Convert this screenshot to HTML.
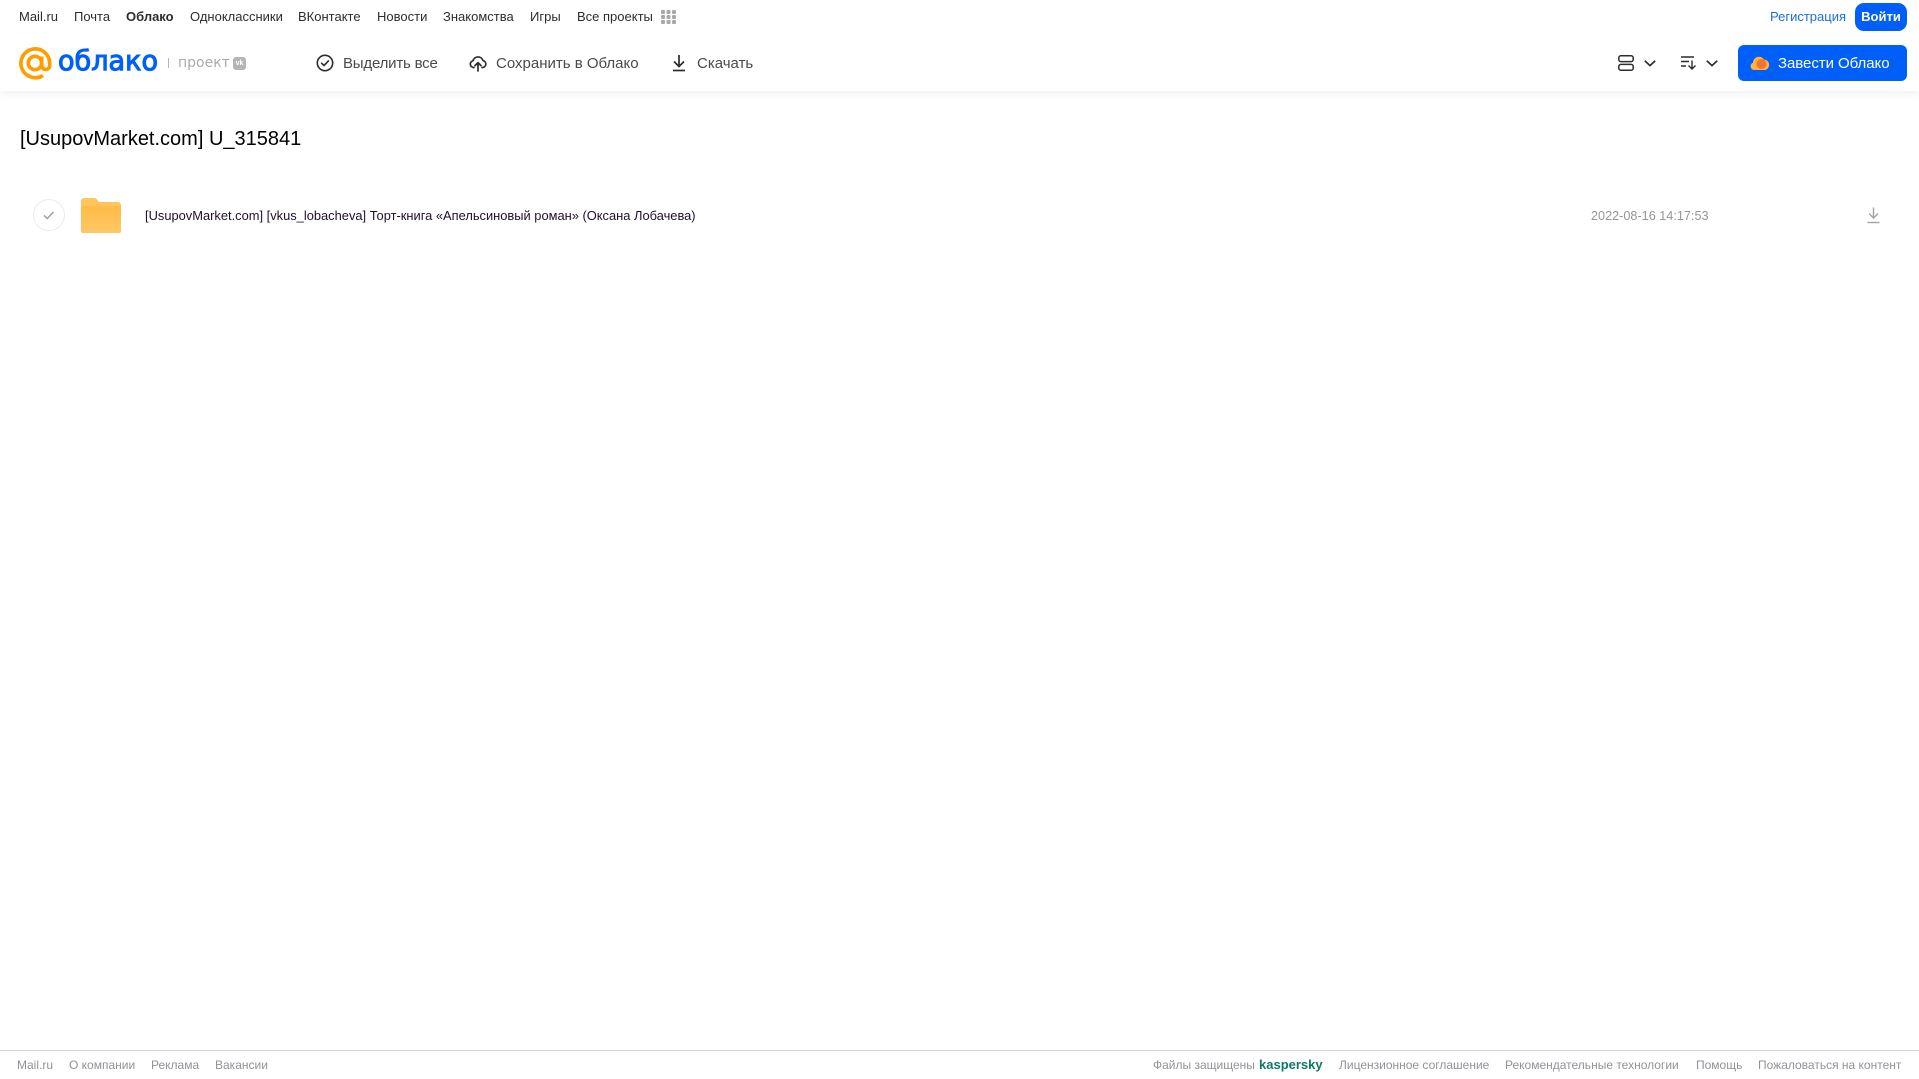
<!DOCTYPE html>
<html lang="ru"><head><meta charset="utf-8"><title>Облако</title>
<style>
html,body{margin:0;padding:0;background:#fff;width:1919px;height:1079px;overflow:hidden}
body{font-family:"Liberation Sans",Arial,sans-serif;position:relative}
.t{position:absolute;white-space:nowrap;line-height:18px;height:18px}
.n{top:8px;font-size:13px;color:#2c2d2e}
.b{top:54.5px;font-size:15px;color:#4a4b4d}
.f{top:1056px;font-size:12px;color:#919399}
svg{position:absolute;overflow:visible}
#hd{position:absolute;left:0;top:0;width:1919px;height:91px;background:#fff;box-shadow:0 2px 8px rgba(0,0,0,.07)}
</style></head><body>
<div id="hd"></div>
<span class="t n" style="left:19px">Mail.ru</span>
<span class="t n" style="left:74px">Почта</span>
<span class="t n" style="left:126px;font-weight:700">Облако</span>
<span class="t n" style="left:190px">Одноклассники</span>
<span class="t n" style="left:298px">ВКонтакте</span>
<span class="t n" style="left:377px">Новости</span>
<span class="t n" style="left:443px">Знакомства</span>
<span class="t n" style="left:530px">Игры</span>
<span class="t n" style="left:577px">Все проекты</span>
<svg style="left:661px;top:10px" width="15" height="14" fill="#a8a9ab"><rect width="4" height="4" rx="1"/><rect x="5.500" width="4" height="4" rx="1"/><rect x="11" width="4" height="4" rx="1"/><rect y="5" width="4" height="4" rx="1"/><rect x="5.500" y="5" width="4" height="4" rx="1"/><rect x="11" y="5" width="4" height="4" rx="1"/><rect y="10" width="4" height="4" rx="1"/><rect x="5.500" y="10" width="4" height="4" rx="1"/><rect x="11" y="10" width="4" height="4" rx="1"/></svg>
<span class="t n" style="left:1770px;color:#1a6fe0">Регистрация</span>
<div style="position:absolute;left:1855px;top:3px;width:52px;height:28px;border-radius:9px;background:#005ff9;color:#fff;font-size:13px;font-weight:700;line-height:27px;text-align:center">Войти</div>

<svg style="left:19px;top:47px" width="33" height="33" viewBox="0 0 33 33" fill="none" stroke="#ff9e00" stroke-width="3.700"><circle cx="16" cy="16" r="6.700"/><path d="M22.700 9.500V18.500a4 4 0 0 0 8 0V16A14.400 14.400 0 1 0 24 28.500"/></svg>
<svg style="left:58px;top:44px" width="104" height="34"><text x="0" y="26" font-family="DejaVu Sans" font-size="28" fill="#005ff9" stroke="#005ff9" stroke-width="1.100" textLength="100" lengthAdjust="spacingAndGlyphs">облако</text></svg>
<div style="position:absolute;left:168px;top:58px;width:1px;height:10px;background:#b5b6b8"></div>
<span class="t" style="left:178px;top:54px;font-family:'DejaVu Sans',sans-serif;font-size:14px;color:#a9abad">проект</span>
<div style="position:absolute;left:233px;top:57px;width:13px;height:13px;border-radius:3px;background:#b4b5b7;color:#fff;font-size:7px;font-weight:700;line-height:13px;text-align:center">vk</div>

<svg style="left:316px;top:54px" width="18" height="18" fill="none" stroke="#2c2d2e" stroke-width="1.600"><circle cx="9" cy="9" r="7.700"/><path d="M5.600 9.200l2.400 2.400 4.400-4.700" stroke-linecap="round" stroke-linejoin="round"/></svg>
<span class="t b" style="left:343px;letter-spacing:-.2px">Выделить все</span>
<svg style="left:469px;top:54px" width="18" height="18" fill="none" stroke="#2c2d2e" stroke-width="1.700" stroke-linecap="round" stroke-linejoin="round"><path d="M5 13.500H4.400A3.400 3.400 0 0 1 4 6.800 5.200 5.200 0 0 1 14 6.600a3.500 3.500 0 0 1-.2 6.900H13"/><path d="M9 17V9M6 11.600L9 8.600l3 3"/></svg>
<span class="t b" style="left:496px">Сохранить в Облако</span>
<svg style="left:671px;top:54px" width="16" height="18" fill="none" stroke="#2c2d2e" stroke-width="1.700"><path d="M8 1v11M3 7.500L8 12.500l5-5"/><path d="M2 16.500h12"/></svg>
<span class="t b" style="left:697px">Скачать</span>

<svg style="left:1618px;top:55px" width="16" height="16" fill="none" stroke="#2c2d2e" stroke-width="1.500"><rect x=".8" y=".8" width="14.400" height="5.800" rx="2"/><rect x=".8" y="9.400" width="14.400" height="5.800" rx="2"/></svg>
<svg style="left:1644px;top:60px" width="12" height="7" fill="none" stroke="#2c2d2e" stroke-width="1.700"><path d="M.8 .8L6 5.600 11.200 .8"/></svg>
<svg style="left:1681px;top:56px" width="16" height="14" fill="none" stroke="#2c2d2e" stroke-width="1.400"><path d="M0 1h13M0 5.500h8M0 10h5M11 4.500v8.500M7.500 9.500L11 13l3.500-3.500"/></svg>
<svg style="left:1706px;top:60px" width="12" height="7" fill="none" stroke="#2c2d2e" stroke-width="1.700"><path d="M.8 .8L6 5.600 11.200 .8"/></svg>
<div style="position:absolute;left:1738px;top:45px;width:169px;height:36px;border-radius:6px;background:#005ff9"></div>
<svg style="left:1750px;top:54px" width="20" height="17"><path d="M4 16A3.800 3.800 0 0 1 3 8.700 6 6 0 0 1 14 5.500a5.400 5.400 0 0 1 1.500 10.500z" fill="#ffb23e"/><circle cx="11.500" cy="10" r="5" fill="#f4742b"/></svg>
<span class="t" style="left:1778px;top:54.500px;font-size:15px;color:#fff;letter-spacing:-.05px">Завести Облако</span>

<span class="t" style="left:20px;top:126px;font-size:20px;line-height:26px;height:26px;color:#000">[UsupovMarket.com] U_315841</span>

<div style="position:absolute;left:33px;top:199px;width:30px;height:30px;border:1px solid #ececec;border-radius:50%"></div>
<svg style="left:43px;top:211px" width="12" height="9" fill="none" stroke="#9a9b9d" stroke-width="1.400"><path d="M1 4.500L4.300 7.500 10.500 1"/></svg>
<svg style="left:81px;top:198px" width="40" height="35"><defs><linearGradient id="g" x1="0" y1="0" x2="0" y2="1"><stop offset="0" stop-color="#ffbc45"/><stop offset="1" stop-color="#ffc766"/></linearGradient></defs><path d="M0 3a3 3 0 0 1 3-3h9c3 0 4 1 5 3l1 1h19a3 3 0 0 1 3 3v25a3 3 0 0 1-3 3H3a3 3 0 0 1-3-3z" fill="#ffc55f"/><rect y="8" width="40" height="27" rx="2" fill="url(#g)"/></svg>
<span class="t" style="left:145px;top:206.500px;font-size:12.880px;color:#1f1030">[UsupovMarket.com] [vkus_lobacheva] Торт-книга «Апельсиновый роман» (Оксана Лобачева)</span>
<span class="t" style="left:1591px;top:206.500px;font-size:12.660px;color:#969696">2022-08-16 14:17:53</span>
<svg style="left:1867px;top:207px" width="13" height="17" fill="none" stroke="#a3a3a3" stroke-width="1.400"><path d="M6.500 .5v10M2 6.500l4.500 4.500L11 6.500"/><path d="M.5 15.500h12"/></svg>

<div style="position:absolute;left:0;top:1050px;width:1919px;height:1px;background:#d6d6d6"></div>
<span class="t f" style="left:17px">Mail.ru</span>
<span class="t f" style="left:69px">О компании</span>
<span class="t f" style="left:151px">Реклама</span>
<span class="t f" style="left:215px">Вакансии</span>
<span class="t f" style="left:1153px">Файлы защищены</span>
<span class="t f" style="left:1259px;font-size:13px;font-weight:700;color:#0d7a61">kaspersky</span>
<span class="t f" style="left:1339px">Лицензионное соглашение</span>
<span class="t f" style="left:1505px">Рекомендательные технологии</span>
<span class="t f" style="left:1696px">Помощь</span>
<span class="t f" style="left:1758px">Пожаловаться на контент</span>
</body></html>
